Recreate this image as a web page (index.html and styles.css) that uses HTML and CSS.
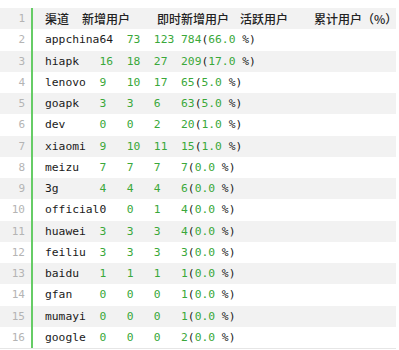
FILE: index.html
```html
<!DOCTYPE html>
<html>
<head>
<meta charset="utf-8">
<link rel="stylesheet" href="styles.css">
</head>
<body>
<div class="code">
  <div class="row"><span class="ln">1</span><span class="txt head"><span class="h h1">渠道</span><span class="h h2">新增用户</span><span class="h h3">即时新增用户</span><span class="h h4">活跃用户</span><span class="h h5">累计用户（%）</span></span></div>
  <div class="row"><span class="ln">2</span><span class="txt">appchina64	<b>73</b>	<b>123</b>	<b>784</b>(<b>66.0</b> %)</span></div>
  <div class="row"><span class="ln">3</span><span class="txt">hiapk	<b>16</b>	<b>18</b>	<b>27</b>	<b>209</b>(<b>17.0</b> %)</span></div>
  <div class="row"><span class="ln">4</span><span class="txt">lenovo	<b>9</b>	<b>10</b>	<b>17</b>	<b>65</b>(<b>5.0</b> %)</span></div>
  <div class="row"><span class="ln">5</span><span class="txt">goapk	<b>3</b>	<b>3</b>	<b>6</b>	<b>63</b>(<b>5.0</b> %)</span></div>
  <div class="row"><span class="ln">6</span><span class="txt">dev		<b>0</b>	<b>0</b>	<b>2</b>	<b>20</b>(<b>1.0</b> %)</span></div>
  <div class="row"><span class="ln">7</span><span class="txt">xiaomi	<b>9</b>	<b>10</b>	<b>11</b>	<b>15</b>(<b>1.0</b> %)</span></div>
  <div class="row"><span class="ln">8</span><span class="txt">meizu	<b>7</b>	<b>7</b>	<b>7</b>	<b>7</b>(<b>0.0</b> %)</span></div>
  <div class="row"><span class="ln">9</span><span class="txt">3g		<b>4</b>	<b>4</b>	<b>4</b>	<b>6</b>(<b>0.0</b> %)</span></div>
  <div class="row"><span class="ln">10</span><span class="txt">official0	<b>0</b>	<b>1</b>	<b>4</b>(<b>0.0</b> %)</span></div>
  <div class="row"><span class="ln">11</span><span class="txt">huawei	<b>3</b>	<b>3</b>	<b>3</b>	<b>4</b>(<b>0.0</b> %)</span></div>
  <div class="row"><span class="ln">12</span><span class="txt">feiliu	<b>3</b>	<b>3</b>	<b>3</b>	<b>3</b>(<b>0.0</b> %)</span></div>
  <div class="row"><span class="ln">13</span><span class="txt">baidu	<b>1</b>	<b>1</b>	<b>1</b>	<b>1</b>(<b>0.0</b> %)</span></div>
  <div class="row"><span class="ln">14</span><span class="txt">gfan	<b>0</b>	<b>0</b>	<b>0</b>	<b>1</b>(<b>0.0</b> %)</span></div>
  <div class="row"><span class="ln">15</span><span class="txt">mumayi	<b>0</b>	<b>0</b>	<b>0</b>	<b>1</b>(<b>0.0</b> %)</span></div>
  <div class="row"><span class="ln">16</span><span class="txt">google	<b>0</b>	<b>0</b>	<b>0</b>	<b>2</b>(<b>0.0</b> %)</span></div>
</div>
</body>
</html>
```
FILE: styles.css
```css
html, body {
  margin: 0;
  padding: 0;
  background: #fff;
}
.code {
  margin-top: 8px;
  width: 396px;
  border-bottom: 1px solid #e6e6e6;
  font-family: "DejaVu Sans Mono", "Liberation Mono", monospace;
  font-size: 11.3px;
  color: #1a1a1a;
}
.row {
  display: flex;
  height: 21.25px;
  line-height: 21.25px;
}
.row:nth-child(odd) {
  background: #f2f2f2;
}
.ln {
  width: 25px;
  padding-right: 6px;
  text-align: right;
  color: #b4b4b4;
  font-size: 11px;
  flex: none;
}
.txt {
  flex: 1;
  border-left: 2px solid #6c6;
  padding-left: 12px;
  white-space: pre;
  tab-size: 4;
  -moz-tab-size: 4;
}
.txt b {
  font-weight: normal;
  color: #3aa83a;
}
.head {
  display: flex;
  font-family: "Noto Sans CJK SC", sans-serif;
  font-size: 12px;
  font-weight: 500;
  color: #222;
}
.h2 { margin-left: 13px; }
.h3 { margin-left: 27px; }
.h4 { margin-left: 11px; }
.h5 { margin-left: 26px; }
```
